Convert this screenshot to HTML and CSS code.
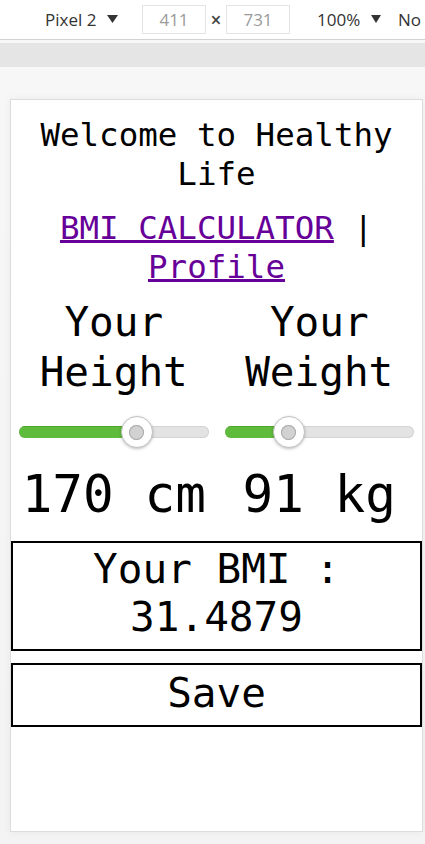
FILE: index.html
```html
<!DOCTYPE html>
<html lang="en">
<head>
<meta charset="utf-8">
<title>Healthy Life</title>
<link rel="stylesheet" href="styles.css">
</head>
<body>
<div class="toolbar">
  <div class="tb-device">Pixel 2 <svg class="caret" width="11" height="8" viewBox="0 0 11 8"><path d="M0 0H11L5.5 8Z" fill="#333"/></svg></div>
  <div class="tb-box">411</div>
  <div class="tb-x">×</div>
  <div class="tb-box">731</div>
  <div class="tb-zoom">100% <svg class="caret" width="10" height="8" viewBox="0 0 10 8"><path d="M0 0H10L5 8Z" fill="#333"/></svg></div>
  <div class="tb-throttle">No</div>
</div>
<div class="tb-gap"></div>
<div class="ruler"></div>
<div class="viewport">
  <main class="card">
    <h1 class="title">Welcome to Healthy Life</h1>
    <p class="nav"><a class="nav-link" href="#">BMI CALCULATOR</a> | <a class="nav-link" href="#">Profile</a></p>
    <div class="inputs">
      <div class="field">
        <div class="label">Your Height</div>
        <div class="slider">
          <div class="track"><div class="fill" style="width:62.1%"></div></div>
          <div class="thumb" style="left:62.1%"></div>
        </div>
        <div class="value">170 cm</div>
      </div>
      <div class="field">
        <div class="label">Your Weight</div>
        <div class="slider">
          <div class="track"><div class="fill" style="width:33.9%"></div></div>
          <div class="thumb" style="left:33.9%"></div>
        </div>
        <div class="value">91 kg</div>
      </div>
    </div>
    <div class="result">Your BMI : 31.4879</div>
    <button class="save" type="button">Save</button>
  </main>
</div>
</body>
</html>
```
FILE: styles.css
```css
html, body {
  margin: 0;
  padding: 0;
}
body {
  background: #f4f4f4;
  width: 425px;
  height: 844px;
  overflow: hidden;
}
.toolbar {
  height: 39px;
  background: #ffffff;
  border-bottom: 1px solid #d2d2d2;
  display: flex;
  align-items: center;
  padding-left: 45px;
  font-family: "Open Sans", "DejaVu Sans", sans-serif;
  font-size: 17px;
  color: #333;
  white-space: nowrap;
  overflow: hidden;
}
.caret {
  display: inline-block;
  vertical-align: middle;
  margin-left: 6px;
  position: relative;
  top: -2px;
}
.tb-device {
  width: 97px;
  flex: none;
}
.tb-box {
  width: 62px;
  height: 27px;
  border: 1px solid #e3e3e3;
  color: #9a9a9a;
  text-align: center;
  line-height: 27px;
  flex: none;
}
.tb-x {
  width: 20px;
  text-align: center;
  flex: none;
  font-size: 19px;
  font-weight: 600;
  color: #444;
}
.tb-zoom {
  margin-left: 27px;
  width: 81px;
  flex: none;
}
.tb-throttle {
  flex: none;
}
.tb-gap {
  height: 3px;
  background: #f7f7f7;
}
.ruler {
  height: 24px;
  background: #e5e5e5;
}
.viewport {
  padding: 32px 2px 0 10px;
  background: linear-gradient(#f7f7f7, #f3f3f3);
  height: 777px;
}
.card {
  box-sizing: content-box;
  width: 411px;
  height: 731px;
  background: #ffffff;
  border: 1px solid #dcdcdc;
  box-shadow: 0 0 8px rgba(0, 0, 0, 0.05);
  font-family: "DejaVu Sans Mono", "Liberation Mono", monospace;
  color: #000;
  text-align: center;
}
.title {
  margin: 16px 0 0;
  font-size: 32.5px;
  line-height: 39px;
  font-weight: normal;
}
.nav {
  margin: 15px 0 0;
  font-size: 32.5px;
  line-height: 39px;
}
.nav-link {
  color: #660099;
  text-decoration: underline;
  text-decoration-thickness: 2.5px;
  text-underline-offset: 1px;
}
.inputs {
  display: grid;
  grid-template-columns: 1fr 1fr;
  margin-top: 10px;
}
.field {
  display: flex;
  flex-direction: column;
  padding: 0 8px;
}
.label {
  font-size: 41px;
  line-height: 50px;
}
.slider {
  position: relative;
  height: 32px;
  margin-top: 19px;
  display: flex;
  align-items: center;
}
.track {
  flex: 1;
  height: 12px;
  border-radius: 6px;
  background: #e3e3e3;
  box-shadow: inset 0 0 0 1px #d3d3d3;
  overflow: hidden;
}
.fill {
  height: 100%;
  background: #5fbb3b;
  box-shadow: inset 0 1px 0 #4fa62e;
}
.thumb {
  position: absolute;
  top: 0;
  width: 32px;
  height: 32px;
  box-sizing: border-box;
  border-radius: 50%;
  background: #ffffff;
  border: 1.5px solid #c2c2c2;
  box-shadow: 0 1px 3px rgba(0, 0, 0, 0.25);
  transform: translateX(-50%);
  display: flex;
  align-items: center;
  justify-content: center;
}
.thumb::after {
  content: "";
  width: 15px;
  height: 15px;
  border-radius: 50%;
  background: #d2d2d2;
  box-shadow: inset 0 0 0 1px #a9a9a9;
}
.value {
  margin-top: 17px;
  font-size: 51px;
  line-height: 60px;
  white-space: nowrap;
}
.result {
  margin-top: 16px;
  border: 2px solid #000;
  padding: 2px 0 8px;
  font-size: 41px;
  line-height: 48px;
}
.save {
  display: block;
  width: 100%;
  margin: 12px 0 0;
  border: 2px solid #000;
  background: #ffffff;
  padding: 4px 0 8px;
  font-family: "DejaVu Sans Mono", "Liberation Mono", monospace;
  font-size: 41px;
  line-height: 48px;
  color: #000;
  cursor: pointer;
}
```
